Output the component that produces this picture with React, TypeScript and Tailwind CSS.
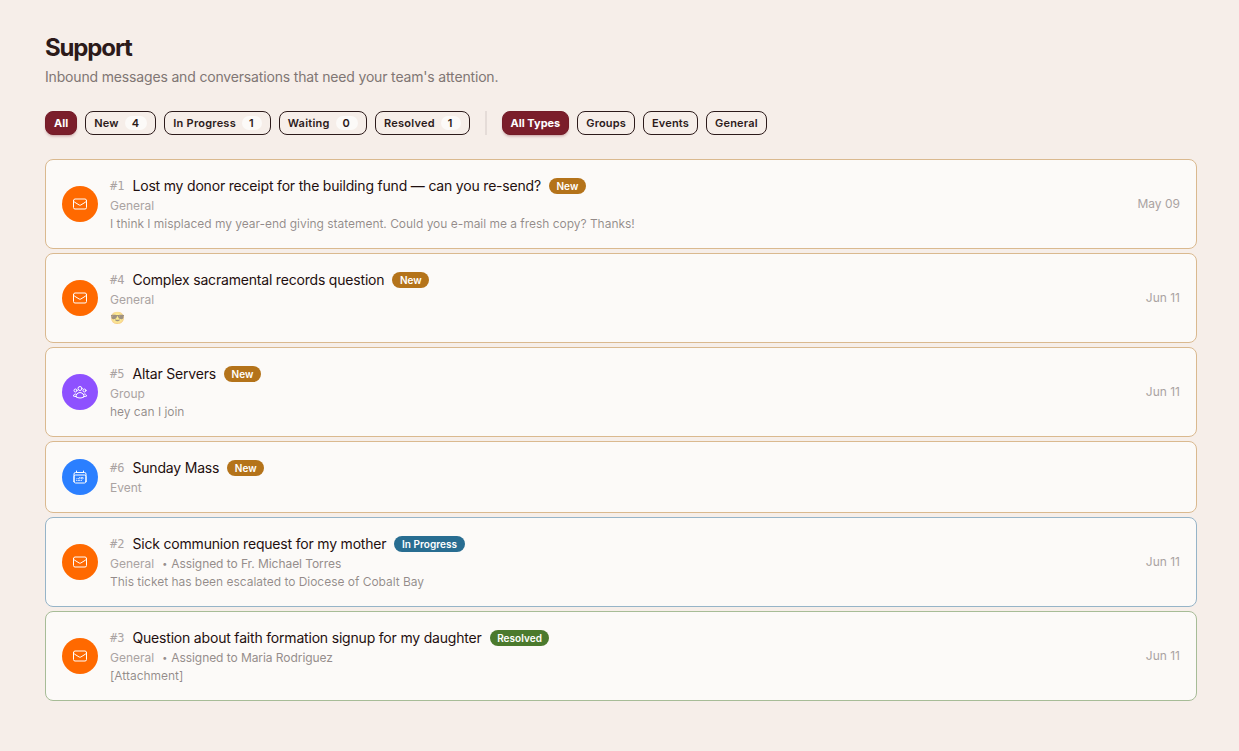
import clsx from "clsx";
import {
  HiOutlineCalendarDays,
  HiOutlineEnvelope,
  HiOutlineUserGroup,
} from "react-icons/hi2";

type Kind = "General" | "Group" | "Event";
type Status = "New" | "In Progress" | "Resolved";

type Ticket = {
  id: number;
  subject: string;
  kind: Kind;
  status: Status;
  assignee?: string;
  preview?: string;
  date?: string;
};

const TICKETS: Ticket[] = [
  {
    id: 1,
    subject: "Lost my donor receipt for the building fund — can you re-send?",
    kind: "General",
    status: "New",
    preview:
      "I think I misplaced my year-end giving statement. Could you e-mail me a fresh copy? Thanks!",
    date: "May 09",
  },
  {
    id: 4,
    subject: "Complex sacramental records question",
    kind: "General",
    status: "New",
    preview: "😎",
    date: "Jun 11",
  },
  {
    id: 5,
    subject: "Altar Servers",
    kind: "Group",
    status: "New",
    preview: "hey can I join",
    date: "Jun 11",
  },
  { id: 6, subject: "Sunday Mass", kind: "Event", status: "New" },
  {
    id: 2,
    subject: "Sick communion request for my mother",
    kind: "General",
    status: "In Progress",
    assignee: "Fr. Michael Torres",
    preview: "This ticket has been escalated to Diocese of Cobalt Bay",
    date: "Jun 11",
  },
  {
    id: 3,
    subject: "Question about faith formation signup for my daughter",
    kind: "General",
    status: "Resolved",
    assignee: "Maria Rodriguez",
    preview: "[Attachment]",
    date: "Jun 11",
  },
];

const STATUS_FILTERS = [
  { label: "All" },
  { label: "New", count: 4 },
  { label: "In Progress", count: 1 },
  { label: "Waiting", count: 0 },
  { label: "Resolved", count: 1 },
];

const TYPE_FILTERS = ["All Types", "Groups", "Events", "General"];

const KIND_STYLES = {
  General: { icon: HiOutlineEnvelope, className: "bg-[#ff6900]" },
  Group: { icon: HiOutlineUserGroup, className: "bg-[#8e51ff]" },
  Event: { icon: HiOutlineCalendarDays, className: "bg-[#2b7fff]" },
};

const STATUS_STYLES = {
  New: { badge: "bg-[#b4731a]", border: "border-[#dab98f]" },
  "In Progress": { badge: "bg-[#286d91]", border: "border-[#96b4c8]" },
  Resolved: { badge: "bg-[#4b7a2d]", border: "border-[#a7bc97]" },
};

function FilterButton({
  label,
  count,
  active,
}: {
  label: string;
  count?: number;
  active?: boolean;
}) {
  return (
    <button
      type="button"
      className={clsx(
        "flex h-6 items-center rounded-lg border px-2 text-[11px] whitespace-nowrap",
        active
          ? "border-[#741c28] bg-[#7b1e2b] font-bold text-white shadow-[0_2px_3px_-1px_rgba(123,30,43,0.4)]"
          : "border-[#2c1a1a] font-semibold text-[#2c1a1a]",
        !active && (count === undefined ? "tracking-[0.17px]" : "tracking-[0.23px]"),
      )}
    >
      {label}
      {count !== undefined && (
        <span className="ml-1.5 flex h-3.5 items-center rounded-full bg-[#fcfaf8] pr-[8.2px] pl-[7px] text-[11px] tracking-normal">
          {count}
        </span>
      )}
    </button>
  );
}

function TicketRow({ ticket }: { ticket: Ticket }) {
  const kind = KIND_STYLES[ticket.kind];
  const status = STATUS_STYLES[ticket.status];
  const Icon = kind.icon;

  return (
    <li
      className={clsx(
        "flex items-center gap-3 rounded-lg border bg-[#fcfaf8] p-4",
        status.border,
      )}
    >
      <div
        className={clsx(
          "flex size-9 shrink-0 items-center justify-center rounded-full text-white",
          kind.className,
        )}
      >
        <Icon className="size-4" />
      </div>
      <div className="min-w-0 flex-1">
        <div className="flex h-5 items-center gap-2">
          <span className="font-[DejaVu_Sans_Mono,monospace] text-xs text-[#aaa3a2]">
            #{ticket.id}
          </span>
          <span className="text-sm tracking-[-0.19px] text-[#1f0f0f]">{ticket.subject}</span>
          <span
            className={clsx(
              "flex h-4 items-center rounded-full px-[7.5px] text-[10px] font-semibold tracking-[0.05px] text-white",
              status.badge,
            )}
          >
            {ticket.status}
          </span>
        </div>
        <div className="flex h-[18px] items-center gap-2 pt-0.5 text-xs text-[#aaa3a2]">
          <span>{ticket.kind}</span>
          {ticket.assignee && (
            <span className="flex items-center gap-1 tracking-[-0.06px] text-[#968e8c]">
              <span className="text-[9px]">•</span>
              Assigned to {ticket.assignee}
            </span>
          )}
        </div>
        {ticket.preview && (
          <p className="h-[18px] truncate text-xs leading-5 tracking-[-0.03px] text-[#2c1a1a]/50">
            {ticket.preview}
          </p>
        )}
      </div>
      {ticket.date && <span className="text-xs text-[#aaa3a2]">{ticket.date}</span>}
    </li>
  );
}

export default function App() {
  return (
    <main className="min-h-screen bg-[#f6eee9] pt-8 pr-[42px] pl-[45px] font-[Inter,sans-serif] text-[#2c1a1a]">
      <h1 className="text-2xl font-bold tracking-[-1.15px]">Support</h1>
      <p className="mt-[3px] text-sm tracking-[-0.165px] text-[#807674]">
        Inbound messages and conversations that need your team's attention.
      </p>

      <div className="mt-6 flex items-center gap-2">
        {STATUS_FILTERS.map((f) => (
          <FilterButton key={f.label} label={f.label} count={f.count} active={f.label === "All"} />
        ))}
        <div className="mx-[7px] h-6 w-0.5 bg-[#e5dcd8]" />
        {TYPE_FILTERS.map((label) => (
          <FilterButton key={label} label={label} active={label === "All Types"} />
        ))}
      </div>

      <ul className="mt-6 flex flex-col gap-1">
        {TICKETS.map((ticket) => (
          <TicketRow key={ticket.id} ticket={ticket} />
        ))}
      </ul>
    </main>
  );
}
